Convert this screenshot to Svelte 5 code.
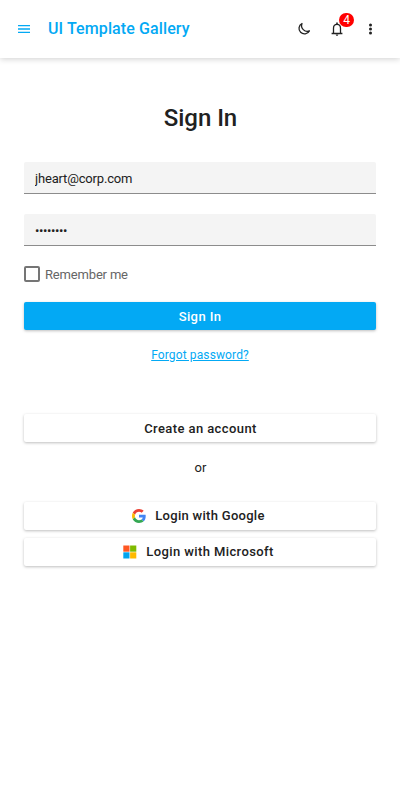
<script>
  let email = $state('jheart@corp.com');
  let password = $state('password');
</script>

<div class="app">
  <header>
    <button class="icon menu" aria-label="Menu">
      <svg width="12" height="8" viewBox="0 0 12 8"><path d="M0 0h12v1.330H0zM0 3.330h12v1.340H0zM0 6.670h12V8H0z" fill="#03a9f4" /></svg>
    </button>
    <div class="brand">UI Template Gallery</div>
    <button class="icon theme" aria-label="Theme">
      <svg width="14" height="14" viewBox="0 0 14 14" fill="none" stroke="#222" stroke-width="1.3" stroke-linejoin="round"><path d="M5 1.500A5.500 5.500 0 1 0 12.400 8.900A5.700 5.700 0 0 1 5 1.500Z" /></svg>
    </button>
    <button class="icon bell" aria-label="Notifications">
      <svg width="12" height="14" viewBox="0 0 12 14" fill="none" stroke="#222" stroke-width="1.3"><path d="M2.500 11V6.200C2.500 3.800 3.800 2.300 6 2.300S9.500 3.800 9.500 6.200V11M.6 11.500H11.400" /><path d="M6 .6V2.300" stroke-width="1.600" /><path d="M4.600 12.500H7.400L6.700 13.800H5.300Z" fill="#222" stroke="none" /></svg>
      <span class="badge">4</span>
    </button>
    <button class="icon more" aria-label="More">
      <svg width="3" height="12" viewBox="0 0 3 12" fill="#222"><circle cx="1.500" cy="2" r="1.500" /><circle cx="1.500" cy="6" r="1.500" /><circle cx="1.500" cy="10" r="1.500" /></svg>
    </button>
  </header>

  <main>
    <h1>Sign In</h1>
    <input class="field" type="text" aria-label="Email" bind:value={email} />
    <input class="field secret" type="password" aria-label="Password" bind:value={password} />
    <label class="remember"><input type="checkbox" /><span>Remember me</span></label>
    <button class="btn primary">Sign In</button>
    <div class="forgot"><a href="#reset">Forgot password?</a></div>
    <button class="btn create">Create an account</button>
    <div class="or">or</div>
    <button class="btn social google">
      <svg width="14" height="14" viewBox="0 0 48 48"><path fill="#EA4335" d="M24 9.500c3.540 0 6.710 1.220 9.210 3.600l6.850-6.850C35.900 2.380 30.470 0 24 0 14.620 0 6.510 5.380 2.560 13.220l7.980 6.190C12.430 13.720 17.740 9.500 24 9.500z" /><path fill="#4285F4" d="M46.980 24.550c0-1.570-.15-3.090-.38-4.550H24v9.020h12.940c-.58 2.960-2.260 5.480-4.780 7.180l7.730 6c4.510-4.180 7.090-10.360 7.090-17.650z" /><path fill="#FBBC05" d="M10.530 28.590c-.48-1.450-.76-2.990-.76-4.590s.27-3.140.76-4.590l-7.980-6.190C.92 16.460 0 20.120 0 24c0 3.880.92 7.540 2.560 10.780l7.970-6.190z" /><path fill="#34A853" d="M24 48c6.480 0 11.930-2.130 15.890-5.810l-7.730-6c-2.150 1.450-4.920 2.300-8.160 2.300-6.260 0-11.570-4.220-13.470-9.910l-7.980 6.190C6.510 42.620 14.620 48 24 48z" /></svg>
      <span>Login with Google</span>
    </button>
    <button class="btn social microsoft">
      <svg width="14" height="14" viewBox="0 0 14 14"><path fill="#ff5722" d="M.3.500h6.200v6.200H.3z" /><path fill="#7fba00" d="M7.100.500h6.200v6.200H7.100z" /><path fill="#03a4ef" d="M.3 7.300h6.200v6.200H.3z" /><path fill="#ffb900" d="M7.100 7.300h6.200v6.200H7.100z" /></svg>
      <span>Login with Microsoft</span>
    </button>
  </main>
</div>

<style>
  :global(body) { margin: 0; background: #fff; }
  .app { min-height: 800px; font: 13px/18px Roboto, sans-serif; color: #212121; }
  button, input { font-family: inherit; box-sizing: border-box; margin: 0; }
  header {
    display: flex; align-items: center; height: 58px; box-sizing: border-box; padding: 0 12px;
    box-shadow: 0 1px 6px rgba(0, 0, 0, 0.19);
  }
  .icon {
    position: relative; display: flex; align-items: center; justify-content: center;
    width: 24px; height: 28px; padding: 0; border: 0; background: none;
  }
  .brand { flex: 1; margin-left: 12px; font-size: 16px; font-weight: 500; line-height: 24px; letter-spacing: 0.11px; color: #03a9f4; }
  .theme, .bell { margin-right: 9px; }
  .more { margin-right: 6px; }
  .badge {
    position: absolute; left: 14px; top: -2px; width: 15px; height: 14px; border-radius: 7px;
    background: #f00; color: #fff; font-size: 12px; line-height: 14px; text-align: center;
  }
  main { display: flex; flex-direction: column; padding: 44px 24px 0; }
  h1 { margin: 0 0 28px; padding-left: 1px; font-size: 24px; line-height: 32px; font-weight: 500; letter-spacing: -0.05px; text-align: center; }
  .field {
    width: 100%; height: 32px; margin-bottom: 20px; padding: 1px 11px 0; border: 0;
    border-bottom: 1px solid #8c8c8c; border-radius: 2px 2px 0 0; background: #f4f4f4;
    color: #212121; font-size: 13px; letter-spacing: -0.17px; outline: none;
  }
  .secret { letter-spacing: -0.4px; }
  .remember { display: flex; align-items: center; height: 16px; color: #666; letter-spacing: -0.17px; }
  .remember span { padding-top: 2px; }
  .remember input { appearance: none; width: 16px; height: 16px; margin-right: 5px; border: 2px solid #757575; border-radius: 2px; }
  .btn {
    display: flex; align-items: center; justify-content: center; height: 28px; padding: 0;
    border: 0; border-radius: 2px; background: #fff; color: #212121; font-size: 13px;
    font-weight: 500; letter-spacing: 0.41px; line-height: 18px;
    box-shadow: 0 1px 3px rgba(0, 0, 0, 0.26);
  }
  .primary { margin-top: 20px; padding-top: 2px; background: #03a9f4; color: #fff; letter-spacing: 0.4px; }
  .forgot { margin-top: 16px; text-align: center; font-size: 12px; letter-spacing: 0.12px; }
  .forgot a { color: #03a9f4; text-decoration: underline; }
  .create { margin-top: 50px; padding: 2px 0 0 1px; }
  .or { margin: 17px 0 25px; padding-left: 1px; text-align: center; }
  .social { margin-bottom: 8px; padding-right: 3px; }
  .social svg { margin-right: 9px; }
  .google { letter-spacing: 0.29px; }
  .microsoft { letter-spacing: 0.4px; }
</style>
